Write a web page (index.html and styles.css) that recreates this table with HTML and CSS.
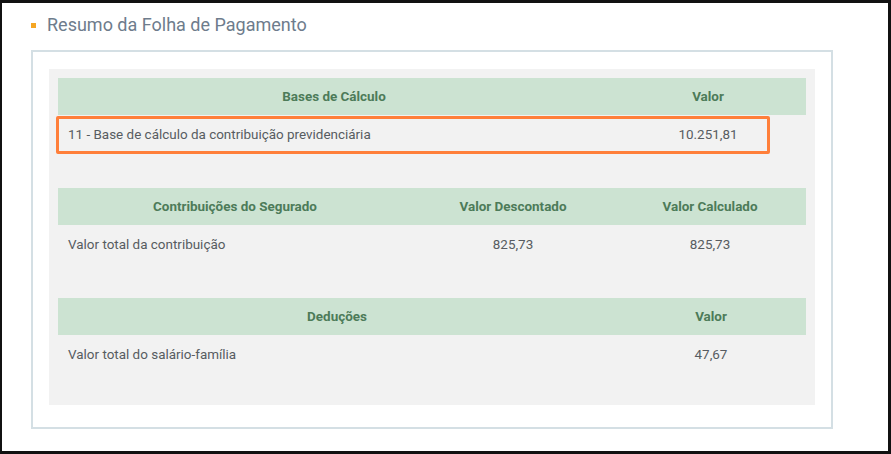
FILE: index.html
```html
<!DOCTYPE html>
<html lang="pt-BR">
<head>
<meta charset="utf-8">
<title>Resumo da Folha de Pagamento</title>
<link rel="stylesheet" href="styles.css">
</head>
<body>
<div class="screen">
  <h2 class="title"><span class="bullet"></span>Resumo da Folha de Pagamento</h2>
  <div class="panel">
    <div class="inner">
      <div class="tbl-wrap">
        <table class="tbl t1">
          <colgroup><col class="c1"><col class="c2"></colgroup>
          <thead><tr><th>Bases de Cálculo</th><th>Valor</th></tr></thead>
          <tbody><tr><td class="left">11 - Base de cálculo da contribuição previdenciária</td><td>10.251,81</td></tr></tbody>
        </table>
        <div class="highlight"></div>
      </div>
      <div class="tbl-wrap">
        <table class="tbl t2">
          <colgroup><col class="c1"><col class="c2"><col class="c3"></colgroup>
          <thead><tr><th>Contribuições do Segurado</th><th>Valor Descontado</th><th>Valor Calculado</th></tr></thead>
          <tbody><tr><td class="left">Valor total da contribuição</td><td>825,73</td><td>825,73</td></tr></tbody>
        </table>
      </div>
      <div class="tbl-wrap">
        <table class="tbl t3">
          <colgroup><col class="c1"><col class="c2"></colgroup>
          <thead><tr><th>Deduções</th><th>Valor</th></tr></thead>
          <tbody><tr><td class="left">Valor total do salário-família</td><td>47,67</td></tr></tbody>
        </table>
      </div>
    </div>
  </div>
</div>
</body>
</html>
```
FILE: styles.css
```css
html, body {
  margin: 0;
  padding: 0;
  background: #111111;
  height: 100%;
}
body {
  font-family: Roboto, "Liberation Sans", sans-serif;
  padding: 3px 3px 3px 2px;
  box-sizing: border-box;
}
.screen {
  background: #ffffff;
  height: 448px;
  padding: 11px 0 0 29px;
  box-sizing: border-box;
}
.title {
  margin: 0;
  font-weight: 400;
  font-size: 18px;
  line-height: 22px;
  color: #6e7c8c;
  display: flex;
  align-items: center;
}
.bullet {
  display: inline-block;
  width: 5px;
  height: 5px;
  background: #f5a623;
  margin: 1px 11px 0 0;
}
.panel {
  margin-top: 14px;
  width: 802px;
  box-sizing: border-box;
  border: 2px solid #d4dfe4;
  padding: 17px 16px 22px 16px;
}
.inner {
  background: #f2f2f2;
  padding: 9px 9px 32px 9px;
}
.tbl-wrap {
  position: relative;
  margin-bottom: 35px;
}
.tbl-wrap:last-child {
  margin-bottom: 0;
}
.tbl {
  width: 100%;
  border-collapse: collapse;
  table-layout: fixed;
  font-size: 13.45px;
}
.tbl th {
  background: #cce3d2;
  color: #4d7b59;
  font-weight: 700;
  height: 37px;
  padding: 0;
  text-align: center;
}
.tbl td {
  height: 38px;
  padding: 0;
  text-align: center;
  color: #575c61;
}
.tbl td.left {
  text-align: left;
  padding-left: 10px;
}
.t1 .c1 { width: 552px; }
.t1 .c2 { width: 196px; }
.t2 .c1 { width: 354px; }
.t2 .c2 { width: 202px; }
.t2 .c3 { width: 192px; }
.t3 .c1 { width: 558px; }
.t3 .c2 { width: 190px; }
.highlight {
  position: absolute;
  top: 38px;
  left: -2px;
  width: 714px;
  height: 38px;
  box-sizing: border-box;
  border: 3px solid #ff7f3a;
  border-radius: 2px;
}
```
